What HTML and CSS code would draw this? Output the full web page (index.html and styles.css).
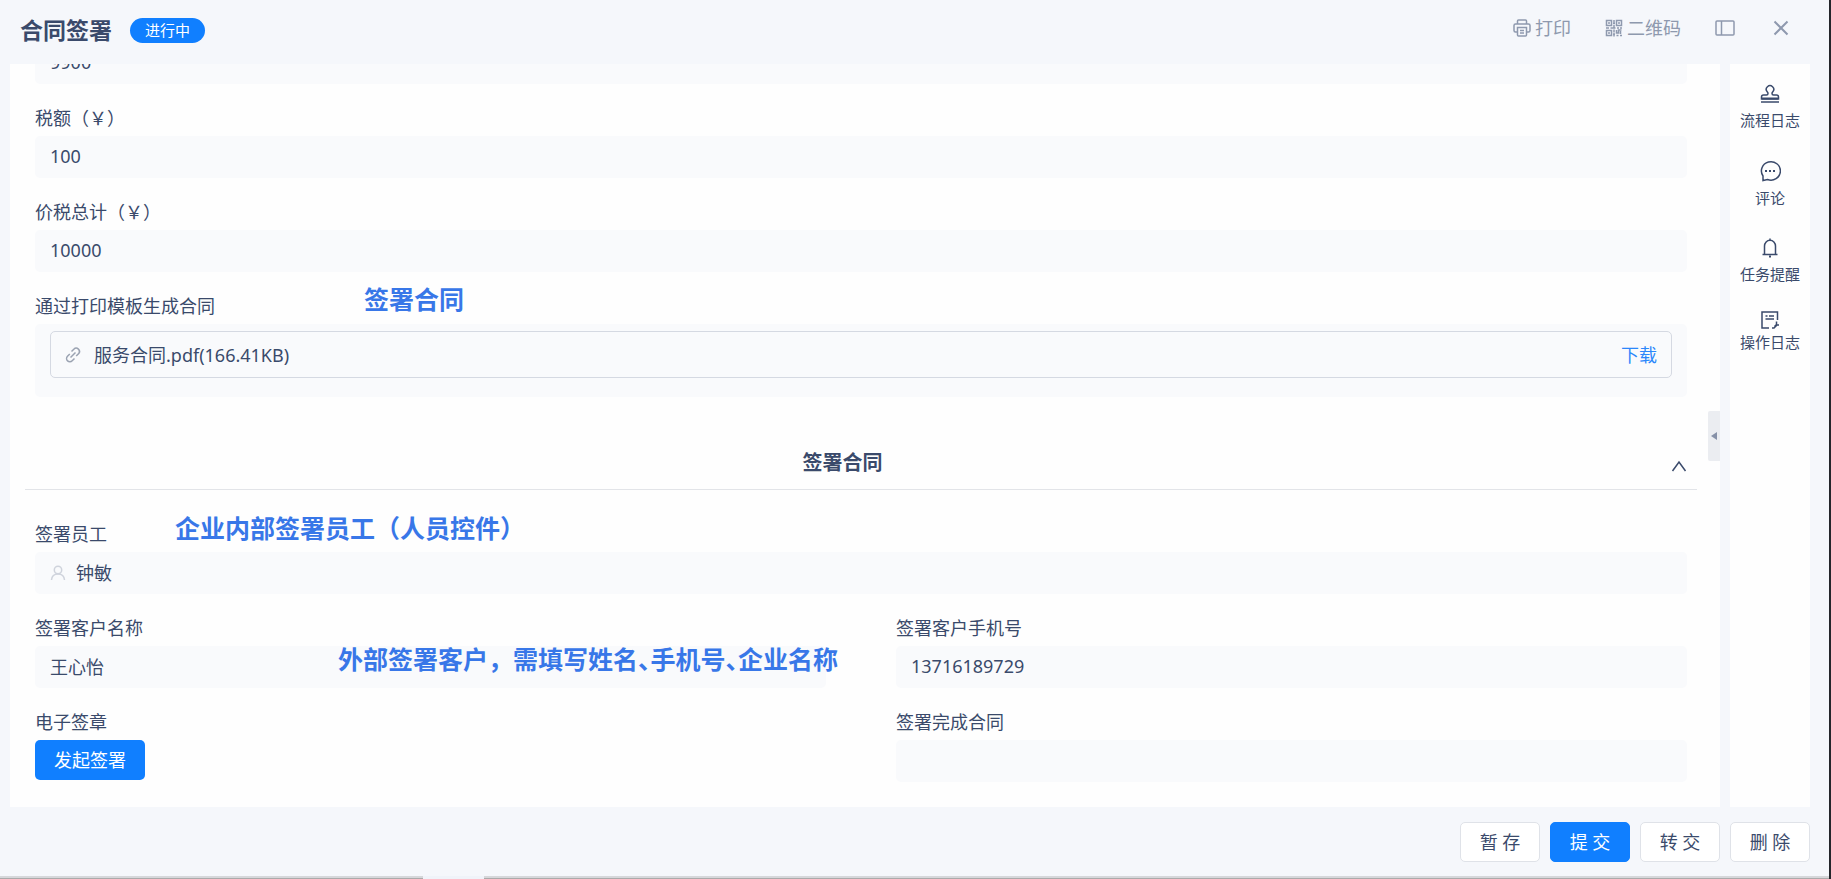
FILE: index.html
```html
<!DOCTYPE html>
<html lang="zh-CN">
  <head>
    <meta charset="utf-8" />
    <meta name="viewport" content="width=device-width, initial-scale=1" />
    <title>合同签署</title>
    <link rel="stylesheet" href="styles.css">
  </head>

  <body>
    <header class="header">
      <h1>合同签署</h1>
      <span class="status">进行中</span>
      <div class="tools">
        <button type="button" class="tool">
          <svg width="18" height="18" viewBox="0 0 18 18">
            <path d="M4.500 5V2q0-1 1-1h7q1 0 1 1v3M4.500 13h-2q-1.500 0-1.500-1.500v-5q0-1.500 1.500-1.500h13q1.500 0 1.500 1.500v5q0 1.500-1.500 1.500h-2" />
            <path d="M4.500 8.500h9v7.500q0 1-1 1h-7q-1 0-1-1zM7 11.500h4M7 14h4" />
          </svg>
          打印
        </button>
        <button type="button" class="tool">
          <svg width="18" height="18" viewBox="0 0 18 18">
            <path d="M1.500 1.500h5v5h-5zM11.500 1.500h5v5h-5zM1.500 11.500h5v5h-5zM4 3v2M14 3v2M4 13v2M9 1v3M8 4.500h2M9 6v3M1 9h3M5.500 9h5M12 9h2M15 9h2M9 10.500v3M8 15h2M9 15v2.500M11.500 11v3h2v-3h3M15.500 12v3M11.500 16.500h2M15 16.500h2" />
          </svg>
          二维码
        </button>
        <button type="button" class="tool" aria-label="侧边栏">
          <svg width="20" height="16" viewBox="0 0 20 16">
            <rect x="1" y="1" width="18" height="14" rx="1" />
            <path d="M6.500 1v14" />
          </svg>
        </button>
        <button type="button" class="tool tool-close" aria-label="关闭">
          <svg width="16" height="16" viewBox="0 0 16 16">
            <path d="M1.500 1.500l13 13M14.500 1.500l-13 13" />
          </svg>
        </button>
      </div>
    </header>

    <div class="content">
      <main class="panel">
        <form class="form" id="contractForm">
          <div class="field">
            <input type="text" aria-label="不含税金额" value="9900" readonly />
          </div>
          <div class="field">
            <label for="tax">税额（￥）</label>
            <input type="text" id="tax" value="100" readonly />
          </div>
          <div class="field">
            <label for="total">价税总计（￥）</label>
            <input type="text" id="total" value="10000" readonly />
          </div>
          <div class="field">
            <span class="label">通过打印模板生成合同</span>
            <div class="files">
              <div class="file">
                <svg width="16" height="16" viewBox="0 0 16 16">
                  <path d="M6.500 4.500l2.300-2.300a3.200 3.200 0 0 1 4.700 4.500l-2.300 2.400M9.500 11.500l-2.300 2.300a3.200 3.200 0 0 1-4.700-4.500l2.300-2.400M5.500 10.500l5-5" />
                </svg>
                <span>服务合同.pdf(166.41KB)</span>
                <a href="#">下载</a>
              </div>
            </div>
            <span class="note note-contract">签署合同</span>
          </div>

          <div class="section">
            <h2>签署合同</h2>
            <button type="button" class="fold" aria-label="收起">
              <svg width="16" height="12" viewBox="0 0 16 12">
                <path d="M1.500 11L8 2l6.500 9" />
              </svg>
            </button>
          </div>

          <div class="field">
            <label for="staff">签署员工</label>
            <div class="person">
              <svg width="16" height="16" viewBox="0 0 16 16">
                <circle cx="8" cy="5" r="3.700" />
                <path d="M1.500 15c.3-3.600 2.500-6 6.500-6s6.200 2.400 6.500 6" />
              </svg>
              <input type="text" id="staff" value="钟敏" readonly />
            </div>
            <span class="note note-staff">企业内部签署员工（人员控件）</span>
          </div>

          <div class="row">
            <div class="field">
              <label for="customer">签署客户名称</label>
              <input type="text" id="customer" value="王心怡" readonly />
              <span class="note note-customer">外部签署客户，需填写姓名<span class="comma">、</span>手机号<span class="comma">、</span>企业名称</span>
            </div>
            <div class="field">
              <label for="phone">签署客户手机号</label>
              <input type="text" id="phone" value="13716189729" readonly />
            </div>
            <div class="field">
              <span class="label">电子签章</span>
              <button type="button" class="sign">发起签署</button>
            </div>
            <div class="field">
              <label for="signed">签署完成合同</label>
              <input type="text" id="signed" value="" readonly />
            </div>
          </div>
        </form>
        <button type="button" class="handle" aria-label="展开">
          <svg width="6" height="8" viewBox="0 0 6 8">
            <path d="M6 0v8L0 4z" />
          </svg>
        </button>
      </main>

      <nav class="sidebar">
        <button type="button" class="side-item">
          <svg width="20" height="20" viewBox="0 0 20 20">
            <path d="M1.500 15v-2q0-2 2-2h3q1.500 0 1.500-1.500 0-.8-.8-1.700a3.700 3.700 0 1 1 5.600 0q-.8.9-.8 1.700 0 1.500 1.500 1.500h3q2 0 2 2v2zM1 18h18" />
            <path class="dots" d="M2 14.500h16" />
          </svg>
          流程日志
        </button>
        <button type="button" class="side-item">
          <svg width="22" height="22" viewBox="0 0 22 22">
            <path d="M4 20.500v-4.500a9.500 9.200 0 1 1 4.500 3.500z" />
            <path class="dots" d="M6 11h2M10 11h2M14 11h2" />
          </svg>
          评论
        </button>
        <button type="button" class="side-item">
          <svg width="20" height="20" viewBox="0 0 20 20">
            <path d="M4.500 16.500V8a5.500 5.800 0 0 1 11 0v8.500M2.500 16.500h15M10 .5v2" />
            <path class="dots" d="M9 18.500h2" />
          </svg>
          任务提醒
        </button>
        <button type="button" class="side-item">
          <svg width="20" height="20" viewBox="0 0 20 20">
            <path d="M9 18h-7V2h15.500v8M5.500 6h2M9 6h5M5.500 9h8.500M12 18h2l3-3h2M16.500 11.500v3l-2 2" />
          </svg>
          操作日志
        </button>
      </nav>
    </div>

    <footer class="footer">
      <button type="button">暂 存</button>
      <button type="submit" form="contractForm" class="primary">提 交</button>
      <button type="button">转 交</button>
      <button type="button">删 除</button>
    </footer>
    <div class="edge"><span></span></div>
  </body>
</html>
```

FILE: styles.css
```css
* {
  box-sizing: border-box;
}

body {
  display: flex;
  flex-direction: column;
  height: 100vh;
  margin: 0;
  border-right: 2px solid #24262b;
  background-color: #f5f7fb;
  color: #3a4a6b;
  font-family: "Noto Sans", "Noto Sans CJK SC", sans-serif;
  font-size: 18px;
  line-height: 24px;
  overflow: hidden;
}

button,
input {
  padding: 0;
  border: none;
  background: none;
  color: inherit;
  font: inherit;
}

svg {
  flex: none;
  fill: none;
  stroke: currentColor;
  stroke-width: 1.5;
}

.header {
  display: flex;
  align-items: center;
  height: 64px;
  padding: 0 40px 4px 20px;
}

h1 {
  margin: 0;
  font-size: 23px;
  font-weight: 700;
}

.status {
  margin-left: 18px;
  padding: 0 15px;
  border-radius: 13px;
  background-color: #107fff;
  color: #fff;
  font-size: 15px;
  line-height: 25px;
}

.tools {
  display: flex;
  align-items: center;
  gap: 34px;
  margin-left: auto;
  padding-bottom: 4px;
  color: #8e99ae;
}

.tool {
  display: flex;
  align-items: center;
  gap: 4px;
}

.tool-close {
  margin-left: 4px;
}

.tool-close svg {
  stroke-width: 2;
}

.content {
  display: flex;
  flex: 1;
  gap: 10px;
  min-height: 0;
  padding: 0 19px 0 10px;
}

.panel {
  position: relative;
  display: flex;
  flex: 1;
  flex-direction: column;
  justify-content: flex-end;
  background-color: #fefefe;
  overflow: hidden;
}

.form {
  padding: 0 33px 25px 25px;
}

.field {
  position: relative;
  margin-bottom: 22px;
}

.field label,
.label {
  display: block;
  margin-bottom: 6px;
}

.field input {
  display: block;
  width: 100%;
  height: 42px;
  padding: 0 15px 2px;
  border-radius: 5px;
  background-color: #f9fafc;
  outline: none;
}

.files {
  padding: 7px 15px 19px;
  border-radius: 5px;
  background-color: #f9fafc;
}

.file {
  display: flex;
  align-items: center;
  height: 47px;
  padding: 0 14px;
  border: 1px solid #d5d9e2;
  border-radius: 5px;
}

.file svg {
  margin-right: 13px;
  color: #9ba3b2;
}

.file a {
  margin-left: auto;
  color: #2b87fb;
  text-decoration: none;
}

.section {
  position: relative;
  margin: 0 -10px 32px;
  padding: 32px 37px 14px 0;
  border-bottom: 1px solid #e2e4e8;
}

h2 {
  margin: 0;
  font-size: 20px;
  font-weight: 700;
  text-align: center;
}

.fold {
  position: absolute;
  right: 10px;
  bottom: 17px;
  line-height: 0;
}

.person {
  display: flex;
  align-items: center;
  padding-left: 15px;
  border-radius: 5px;
  background-color: #f9fafc;
}

.person svg {
  color: #cfd3dc;
}

.field .person input {
  padding: 0 10px 2px;
}

.row {
  display: grid;
  grid-template-columns: 1fr 1fr;
  column-gap: 70px;
}

.row .field:nth-last-child(-n + 2) {
  margin-bottom: 0;
}

.sign {
  display: block;
  height: 40px;
  padding: 0 19px;
  border-radius: 5px;
  background-color: #107fff;
  color: #fff;
}

/* hints written over the form */
.note {
  position: absolute;
  color: #3877e8;
  font-size: 25px;
  font-weight: 600;
  line-height: 36px;
  white-space: nowrap;
}

.note-contract {
  top: -13px;
  left: 329px;
}

.note-staff {
  top: -12px;
  left: 140px;
}

.note-customer {
  top: 25px;
  left: 303px;
  z-index: 1;
}

.comma {
  font-feature-settings: "palt";
}

.handle {
  position: absolute;
  top: 347px;
  right: 0;
  width: 12px;
  height: 50px;
  border-radius: 2px 0 0 2px;
  background-color: #ebedf1;
  color: #8691a8;
  line-height: 0;
}

.handle svg {
  fill: currentColor;
  stroke: none;
}

.sidebar {
  display: flex;
  flex-direction: column;
  gap: 28px;
  width: 80px;
  padding-top: 20px;
  background-color: #fefefe;
}

.side-item {
  display: flex;
  flex-direction: column;
  align-items: center;
  gap: 4px;
  font-size: 15px;
}

.side-item:last-child {
  gap: 0;
  margin-top: -4px;
}

.dots {
  stroke-width: 2;
}

.footer {
  display: flex;
  justify-content: flex-end;
  gap: 10px;
  padding: 15px 19px 14px;
}

.footer button {
  width: 80px;
  height: 40px;
  border: 1px solid #dfe2e8;
  border-radius: 5px;
  background-color: #fff;
}

.footer .primary {
  border-color: #107fff;
  background-color: #107fff;
  color: #fff;
}

.edge {
  flex: none;
  height: 3px;
  padding-left: 423px;
  border-bottom: 1px solid #aaa;
  background-color: #d6d7da;
}

.edge span {
  display: block;
  width: 61px;
  height: 3px;
  background-color: #f0f3f9;
}
```
